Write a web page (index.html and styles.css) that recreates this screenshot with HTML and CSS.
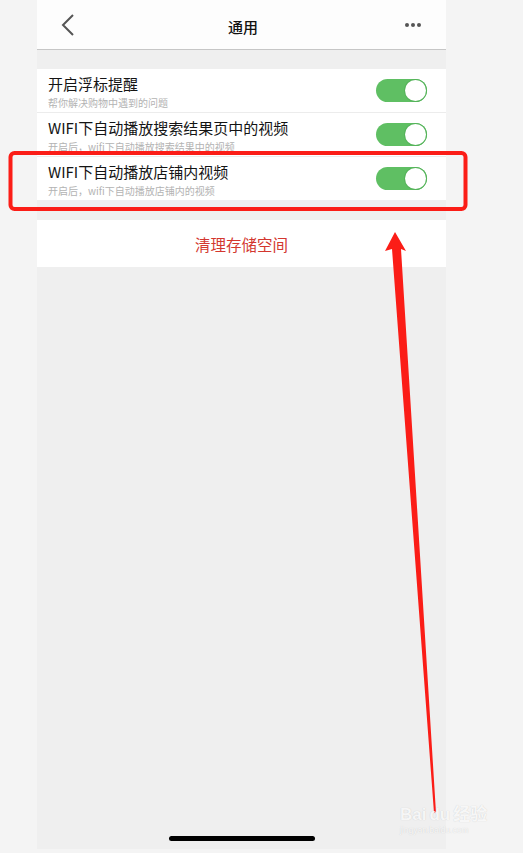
FILE: index.html
```html
<!DOCTYPE html>
<html lang="zh-CN">
<head>
    <meta charset="UTF-8">
    <meta name="viewport" content="width=device-width, initial-scale=1.0">
    <title>通用</title>
    <link rel="stylesheet" href="styles.css">
</head>
<body>
    <div class="screen">
        <header class="nav-bar">
            <svg class="back" width="14" height="22" viewBox="0 0 14 22">
                <path d="M12 1 L2 11 L12 21" fill="none" stroke="#555" stroke-width="2"/>
            </svg>
            <h1>通用</h1>
            <div class="more"><span></span><span></span><span></span></div>
        </header>

        <div class="group">
            <div class="row">
                <div class="text">
                    <div class="title">开启浮标提醒</div>
                    <div class="sub">帮你解决购物中遇到的问题</div>
                </div>
                <div class="switch on"><span class="knob"></span></div>
            </div>
            <div class="row">
                <div class="text">
                    <div class="title">WIFI下自动播放搜索结果页中的视频</div>
                    <div class="sub">开启后，wifi下自动播放搜索结果中的视频</div>
                </div>
                <div class="switch on"><span class="knob"></span></div>
            </div>
            <div class="row">
                <div class="text">
                    <div class="title">WIFI下自动播放店铺内视频</div>
                    <div class="sub">开启后，wifi下自动播放店铺内的视频</div>
                </div>
                <div class="switch on"><span class="knob"></span></div>
            </div>
        </div>

        <div class="clear-btn">清理存储空间</div>

        <div class="home-bar"></div>
    </div>

    <!-- annotation drawn over the screenshot -->
    <svg class="marks" width="523" height="853" viewBox="0 0 523 853">
        <rect x="10.5" y="153" width="455" height="56" rx="4" fill="none" stroke="#fb1d17" stroke-width="4"/>
        <polygon points="395,232 406,251 401,249 436,813 434,813 392,249 385,251" fill="#fb1d17"/>
    </svg>

    <div class="watermark">
        <div class="wm-logo"><span>Bai</span><span>du</span><span>经验</span></div>
        <div class="wm-url">jingyan.baidu.com</div>
    </div>
</body>
</html>
```

FILE: styles.css
```css
* {
    margin: 0;
    padding: 0;
    box-sizing: border-box;
}
body {
    background-color: #f4f4f4;
    font-family: "Noto Sans CJK SC", "Liberation Sans", sans-serif;
    width: 523px;
    height: 853px;
    position: relative;
    overflow: hidden;
}
.screen {
    margin-left: 37px;
    width: 409px;
    height: 849px;
    background: #efefef;
    display: flex;
    flex-direction: column;
}
.nav-bar {
    height: 50px;
    background: #fdfdfd;
    border-bottom: 1px solid #c6c6c6;
    display: flex;
    align-items: center;
    justify-content: space-between;
    padding: 3px 25px 0 24px;
}
.nav-bar .back {
    margin-top: -3px;
}
.nav-bar h1 {
    font-size: 15px;
    font-weight: 500;
    color: #111;
    margin-left: 6px;
}
.more {
    display: flex;
    gap: 2px;
    margin-top: -3px;
}
.more span {
    width: 4px;
    height: 4px;
    border-radius: 50%;
    background: #555;
}
.group {
    margin-top: 19px;
    background: #fff;
}
.row {
    height: 43px;
    display: flex;
    align-items: center;
    justify-content: space-between;
    padding: 0 19px 0 11px;
}
.row + .row {
    border-top: 1px solid #ececec;
    height: 44px;
}
.text {
    padding-top: 2px;
}
.title {
    font-size: 15px;
    line-height: 20px;
    color: #141414;
}
.sub {
    font-size: 10px;
    line-height: 13px;
    margin-top: 2px;
    color: #b3b3b3;
}
.switch {
    width: 51px;
    height: 23px;
    border-radius: 12px;
    background: #5fbf63;
    position: relative;
    flex-shrink: 0;
}
.switch .knob {
    position: absolute;
    right: 1px;
    top: 1px;
    width: 21px;
    height: 21px;
    border-radius: 50%;
    background: #fff;
    box-shadow: 0 0 0 1px #55b35a;
}
.clear-btn {
    margin-top: 20px;
    height: 47px;
    background: #fff;
    color: #d3372f;
    font-size: 15.5px;
    display: flex;
    align-items: center;
    justify-content: center;
}
.home-bar {
    margin: auto auto 8px;
    width: 146px;
    height: 5px;
    border-radius: 3px;
    background: #000;
}
.marks {
    position: absolute;
    left: 0;
    top: 0;
    pointer-events: none;
}
.watermark {
    position: absolute;
    left: 400px;
    top: 806px;
    color: rgba(255, 255, 255, 0.85);
    text-shadow: 0 0 1px rgba(0, 0, 0, 0.18);
    font-family: "Liberation Sans", "Noto Sans CJK SC", sans-serif;
}
.wm-logo {
    font-size: 17px;
    font-weight: bold;
    line-height: 18px;
    display: flex;
    gap: 3px;
}
.wm-url {
    font-size: 8.5px;
    line-height: 12px;
}
```
